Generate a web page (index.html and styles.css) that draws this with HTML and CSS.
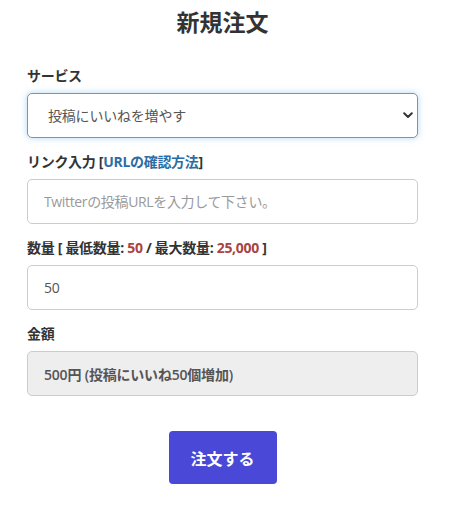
FILE: index.html
```html
<!DOCTYPE html>
<html lang="ja">
<head>
<meta charset="utf-8">
<title>新規注文</title>
<link rel="stylesheet" href="styles.css">
</head>
<body>
<main class="order">
  <h1 class="title">新規注文</h1>
  <form class="form">
    <div class="group">
      <label class="label">サービス</label>
      <div class="select-wrap">
        <select class="control select">
          <option>投稿にいいねを増やす</option>
        </select>
        <svg class="chevron" width="10" height="7" viewBox="0 0 10 7"><path d="M1.2 1.3 L5 5 L8.8 1.3" fill="none" stroke="#333" stroke-width="2" stroke-linecap="round" stroke-linejoin="round"/></svg>
      </div>
    </div>
    <div class="group">
      <label class="label">リンク入力 <span class="bracket">[</span><a class="link" href="#">URLの確認方法</a><span class="bracket">]</span></label>
      <input class="control text" type="text" placeholder="Twitterの投稿URLを入力して下さい。">
    </div>
    <div class="group">
      <label class="label">数量 [ 最低数量: <span class="num">50</span> / 最大数量: <span class="num">25,000</span> ]</label>
      <input class="control text" type="text" value="50">
    </div>
    <div class="group">
      <label class="label">金額</label>
      <div class="control readonly">500円 (投稿にいいね50個増加)</div>
    </div>
    <div class="actions">
      <button class="submit" type="button">注文する</button>
    </div>
  </form>
</main>
</body>
</html>
```

FILE: styles.css
```css
* { box-sizing: border-box; }
body {
  margin: 0;
  background: #fff;
  font-family: "Open Sans", "Noto Sans CJK JP", sans-serif;
  color: #333;
}
.order {
  width: 391px;
  margin-left: 27px;
}
.title {
  margin: 7px 0 0;
  font-size: 23px;
  line-height: 30px;
  font-weight: 700;
  text-align: center;
  color: #333;
}
.form {
  margin-top: 29px;
  display: flex;
  flex-direction: column;
}
.group {
  display: flex;
  flex-direction: column;
  margin-bottom: 14px;
}
.label {
  font-size: 14px;
  line-height: 20px;
  font-weight: 700;
  letter-spacing: -0.3px;
  color: #333;
  margin-bottom: 7px;
  white-space: nowrap;
}
.bracket { color: #333; }
.link { color: #2c6da4; text-decoration: none; }
.num { color: #a94442; }
.control {
  width: 100%;
  height: 45px;
  border: 1px solid #ccc;
  border-radius: 5px;
  background: #fff;
  font-family: inherit;
  font-size: 14px;
  color: #555;
  padding: 0 16px;
  outline: none;
}
.text { letter-spacing: -0.35px; }
.control::placeholder { color: #999; }
.select-wrap { position: relative; }
.select {
  appearance: none;
  -webkit-appearance: none;
  padding-left: 20px;
  letter-spacing: -0.2px;
  border-color: #8d9196;
  box-shadow: 0 0 6px rgba(102, 175, 233, 0.5);
}
.chevron {
  position: absolute;
  right: 5px;
  top: 19px;
}
.readonly {
  display: flex;
  align-items: center;
  background: #eee;
  font-weight: 600;
  letter-spacing: -0.2px;
  color: #555;
}
.actions {
  display: flex;
  justify-content: center;
  margin-top: 21px;
}
.submit {
  width: 108px;
  height: 53px;
  border: none;
  border-radius: 4px;
  background: #4a48d6;
  color: #fff;
  font-family: inherit;
  font-size: 16px;
  font-weight: 700;
}
```
